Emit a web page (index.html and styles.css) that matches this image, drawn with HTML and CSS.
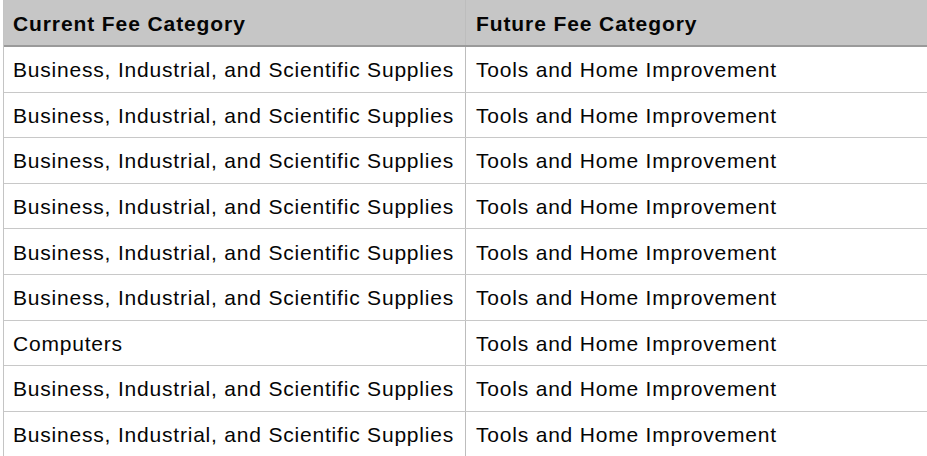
FILE: index.html
```html
<!DOCTYPE html>
<html>
<head>
<meta charset="utf-8">
<link rel="stylesheet" href="styles.css">
</head>
<body>
<div class="table">
  <div class="row head">
    <div class="cell c1">Current Fee Category</div>
    <div class="cell c2">Future Fee Category</div>
  </div>
  <div class="row"><div class="cell c1">Business, Industrial, and Scientific Supplies</div><div class="cell c2">Tools and Home Improvement</div></div>
  <div class="row"><div class="cell c1">Business, Industrial, and Scientific Supplies</div><div class="cell c2">Tools and Home Improvement</div></div>
  <div class="row"><div class="cell c1">Business, Industrial, and Scientific Supplies</div><div class="cell c2">Tools and Home Improvement</div></div>
  <div class="row"><div class="cell c1">Business, Industrial, and Scientific Supplies</div><div class="cell c2">Tools and Home Improvement</div></div>
  <div class="row"><div class="cell c1">Business, Industrial, and Scientific Supplies</div><div class="cell c2">Tools and Home Improvement</div></div>
  <div class="row"><div class="cell c1">Business, Industrial, and Scientific Supplies</div><div class="cell c2">Tools and Home Improvement</div></div>
  <div class="row"><div class="cell c1">Computers</div><div class="cell c2">Tools and Home Improvement</div></div>
  <div class="row"><div class="cell c1">Business, Industrial, and Scientific Supplies</div><div class="cell c2">Tools and Home Improvement</div></div>
  <div class="row"><div class="cell c1">Business, Industrial, and Scientific Supplies</div><div class="cell c2">Tools and Home Improvement</div></div>
</div>
</body>
</html>
```
FILE: styles.css
```css
html, body {
  margin: 0;
  padding: 0;
  background: #ffffff;
  overflow: hidden;
}
.table {
  margin-left: 3px;
  border-left: 1px solid #c4c4c4;
  font-family: "Liberation Sans", Arial, sans-serif;
  font-size: 21px;
  letter-spacing: 0.8px;
  color: #050505;
}
.row {
  display: grid;
  grid-template-columns: 462px 1fr;
  height: 45.6px;
  box-sizing: border-box;
  border-bottom: 1px solid #c8c8c8;
}
.row.head {
  height: 47px;
  background: #c6c6c6;
  border-bottom: 2px solid #9a9a9a;
  font-weight: bold;
  letter-spacing: 0.9px;
}
.cell {
  display: flex;
  align-items: center;
  padding-left: 9px;
  padding-top: 2px;
  white-space: nowrap;
}
.c1 {
  border-right: 1px solid #bdbdbd;
}
.c2 {
  padding-left: 10px;
}
```
